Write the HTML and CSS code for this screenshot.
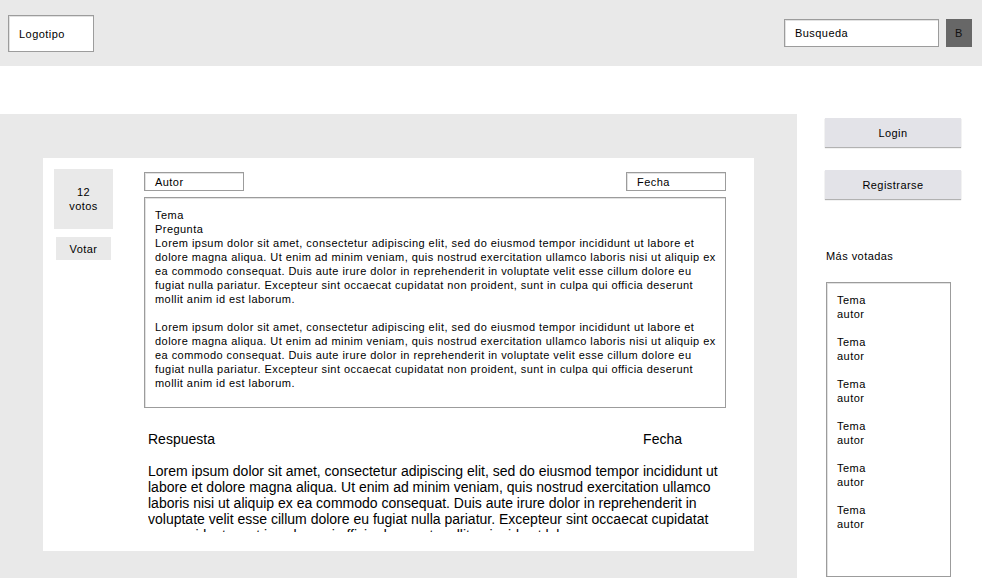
FILE: index.html
```html
<!DOCTYPE html>
<html lang="es">
<head>
<meta charset="utf-8">
<title>Foro</title>
<link rel="stylesheet" href="styles.css">
</head>
<body>
<header class="topbar">
  <div class="logo field">Logotipo</div>
  <div class="search">
    <div class="search-input field">Busqueda</div>
    <div class="search-btn">B</div>
  </div>
</header>
<div class="spacer"></div>
<div class="main">
  <section class="content">
    <article class="card">
      <div class="vote-col">
        <div class="votes">12<br>votos</div>
        <div class="vote-btn">Votar</div>
      </div>
      <div class="post">
        <div class="meta">
          <div class="meta-field field">Autor</div>
          <div class="meta-field field">Fecha</div>
        </div>
        <div class="question field">
          <p>Tema<br>Pregunta<br>Lorem ipsum dolor sit amet, consectetur adipiscing elit, sed do eiusmod tempor incididunt ut labore et dolore magna aliqua. Ut enim ad minim veniam, quis nostrud exercitation ullamco laboris nisi ut aliquip ex ea commodo consequat. Duis aute irure dolor in reprehenderit in voluptate velit esse cillum dolore eu fugiat nulla pariatur. Excepteur sint occaecat cupidatat non proident, sunt in culpa qui officia deserunt mollit anim id est laborum.</p>
          <p>Lorem ipsum dolor sit amet, consectetur adipiscing elit, sed do eiusmod tempor incididunt ut labore et dolore magna aliqua. Ut enim ad minim veniam, quis nostrud exercitation ullamco laboris nisi ut aliquip ex ea commodo consequat. Duis aute irure dolor in reprehenderit in voluptate velit esse cillum dolore eu fugiat nulla pariatur. Excepteur sint occaecat cupidatat non proident, sunt in culpa qui officia deserunt mollit anim id est laborum.</p>
        </div>
        <div class="answer-head">
          <span>Respuesta</span>
          <span class="answer-date">Fecha</span>
        </div>
        <div class="answer">Lorem ipsum dolor sit amet, consectetur adipiscing elit, sed do eiusmod tempor incididunt ut labore et dolore magna aliqua. Ut enim ad minim veniam, quis nostrud exercitation ullamco laboris nisi ut aliquip ex ea commodo consequat. Duis aute irure dolor in reprehenderit in voluptate velit esse cillum dolore eu fugiat nulla pariatur. Excepteur sint occaecat cupidatat non proident, sunt in culpa qui officia deserunt mollit anim id est laborum.</div>
      </div>
    </article>
  </section>
  <aside class="sidebar">
    <div class="side-btn">Login</div>
    <div class="side-btn reg">Registrarse</div>
    <div class="top-title">Más votadas</div>
    <ul class="top-list field">
      <li>Tema<br>autor</li>
      <li>Tema<br>autor</li>
      <li>Tema<br>autor</li>
      <li>Tema<br>autor</li>
      <li>Tema<br>autor</li>
      <li>Tema<br>autor</li>
    </ul>
  </aside>
</div>
</body>
</html>
```

FILE: styles.css
```css
html, body {
  margin: 0;
  padding: 0;
  background: #ffffff;
  font-family: "Liberation Sans", Arial, sans-serif;
  color: #000;
  font-size: 11px;
  line-height: 14px;
  letter-spacing: 0.45px;
  overflow: hidden;
}

.field {
  box-sizing: border-box;
  background: #fff;
  border: 1px solid #9c9c9c;
  box-shadow: inset 1px 1px 0 #e2e2e2;
}

.topbar {
  width: 982px;
  height: 66px;
  background: #e9e9e9;
  display: flex;
  align-items: flex-start;
  justify-content: space-between;
  box-sizing: border-box;
  padding: 0 10px 0 8px;
}

.logo {
  margin-top: 15px;
  width: 86px;
  height: 37px;
  padding-left: 10px;
  display: flex;
  align-items: center;
}

.search {
  margin-top: 19px;
  display: flex;
  gap: 7px;
}

.search-input {
  width: 155px;
  height: 28px;
  padding-left: 10px;
  display: flex;
  align-items: center;
}

.search-btn {
  width: 26px;
  height: 28px;
  background: #676767;
  color: #111;
  display: flex;
  align-items: center;
  justify-content: center;
}

.spacer {
  height: 48px;
}

.main {
  display: flex;
  height: 470px;
}

.content {
  width: 797px;
  background: #e9e9e9;
  box-sizing: border-box;
  padding: 44px 0 0 43px;
}

.card {
  width: 711px;
  height: 393px;
  background: #fff;
  display: flex;
  box-sizing: border-box;
  padding: 11px 0 0 11px;
}

.vote-col {
  width: 90px;
  display: flex;
  flex-direction: column;
  gap: 8px;
}

.votes {
  width: 59px;
  height: 60px;
  background: #e9e9e9;
  display: flex;
  align-items: center;
  justify-content: center;
  text-align: center;
}

.vote-btn {
  margin-left: 2px;
  width: 55px;
  height: 23px;
  background: #e9e9e9;
  display: flex;
  align-items: center;
  justify-content: center;
}

.post {
  width: 582px;
  padding-top: 3px;
}

.meta {
  display: flex;
  justify-content: space-between;
}

.meta-field {
  width: 100px;
  height: 19px;
  padding-left: 10px;
  display: flex;
  align-items: center;
}

.question {
  margin-top: 6px;
  height: 211px;
  padding: 10px 8px 0 10px;
}

.question p {
  margin: 0 0 14px 0;
}

.answer-head {
  display: flex;
  justify-content: space-between;
  padding: 23px 44px 0 4px;
  font-size: 14px;
  line-height: 16px;
  letter-spacing: 0;
}

.answer {
  margin: 16px 0 0 4px;
  width: 576px;
  height: 69px;
  overflow: hidden;
  font-size: 14px;
  line-height: 16px;
  letter-spacing: 0;
}

.sidebar {
  width: 185px;
  box-sizing: border-box;
  padding: 4px 0 0 28px;
}

.side-btn {
  width: 136px;
  height: 29px;
  background: #e3e3e8;
  box-shadow: 0 1px 1px rgba(0, 0, 0, 0.3);
  display: flex;
  align-items: center;
  justify-content: center;
}

.side-btn.reg {
  margin-top: 23px;
}

.top-title {
  margin: 50px 0 0 1px;
}

.top-list {
  list-style: none;
  margin: 19px 0 0 1px;
  width: 125px;
  height: 295px;
  padding: 10px 0 0 10px;
}

.top-list li {
  margin-bottom: 14px;
}
```
